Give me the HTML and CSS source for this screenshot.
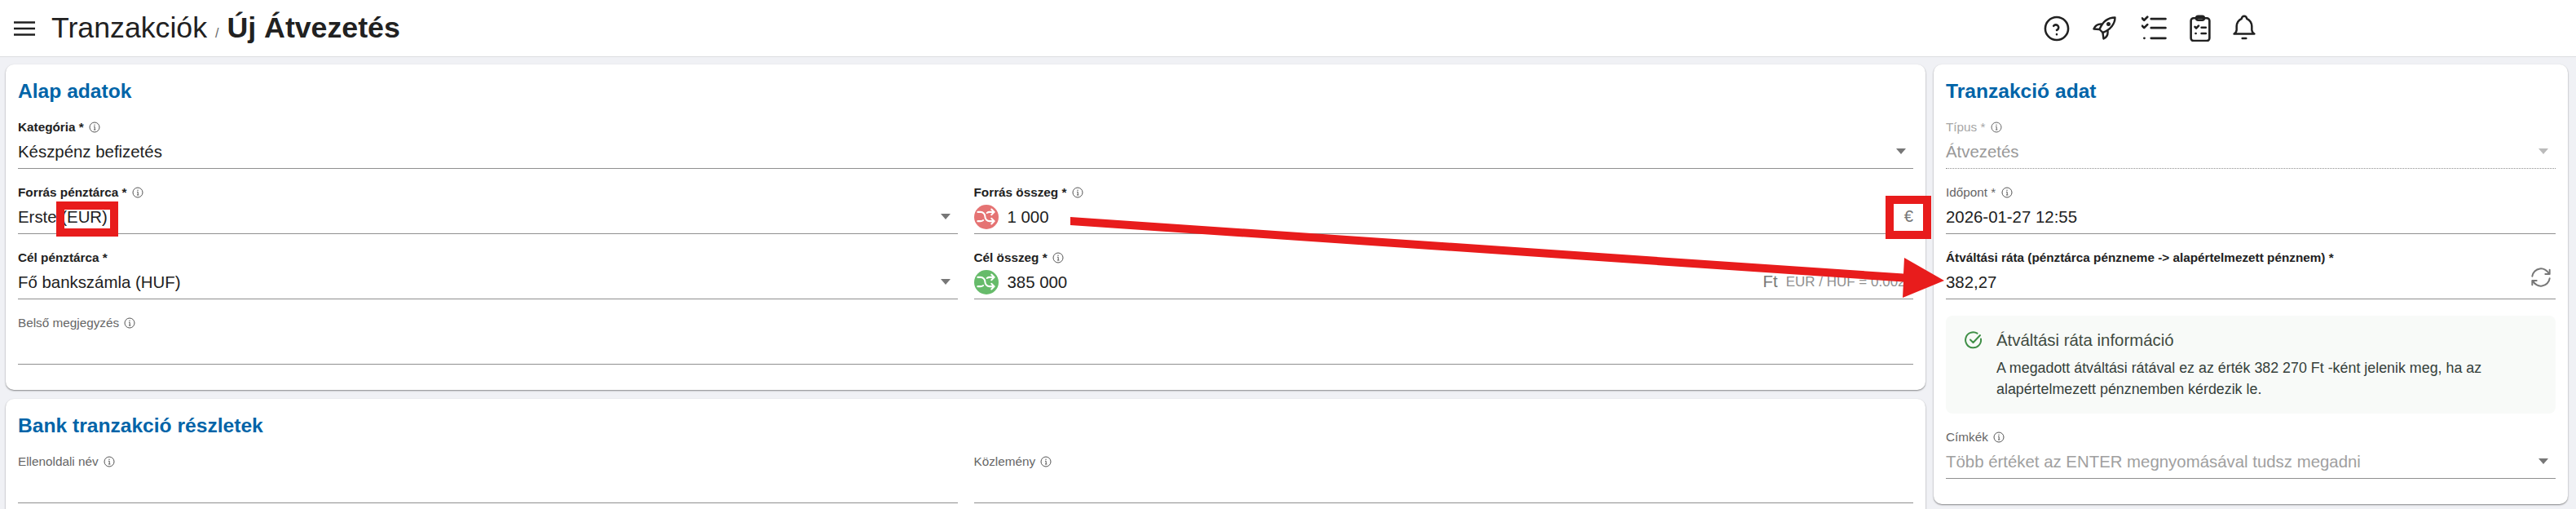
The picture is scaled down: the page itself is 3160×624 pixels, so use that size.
FILE: index.html
```html
<!DOCTYPE html>
<html lang="hu">
<head>
<meta charset="utf-8">
<title>Új Átvezetés</title>
<link rel="stylesheet" href="styles.css">
</head>
<body>
<svg class="defs" width="0" height="0" aria-hidden="true">
  <symbol id="i-info" viewBox="0 0 14 14">
    <circle cx="7" cy="7" r="6" fill="none" stroke="currentColor" stroke-width="1"/>
    <path d="M6 6.3h1.2v3.6M6 10h2.4" fill="none" stroke="currentColor" stroke-width="1"/>
    <circle cx="7" cy="4.2" r=".7" fill="currentColor"/>
  </symbol>
  <symbol id="i-shuffle" viewBox="0 0 24 24">
    <path d="M18 4l3 3l-3 3M18 20l3 -3l-3 -3M3 7h3a5 5 0 0 1 5 5a5 5 0 0 0 5 5h5M21 7h-5a4.98 4.98 0 0 0 -3 1m-4 8a4.98 4.98 0 0 1 -3 1h-3" fill="none" stroke="currentColor" stroke-width="1.8" stroke-linecap="round" stroke-linejoin="round"/>
  </symbol>
</svg>

<header class="topbar">
  <svg class="menu" viewBox="0 0 28 24"><path d="M1 4.5h26M1 12h26M1 19.5h26"/></svg>
  <h1 class="crumbs"><span>Tranzakciók</span><span class="sep">/</span><strong>Új Átvezetés</strong></h1>
  <nav class="actions">
    <svg class="ico ico-help" viewBox="2 2 20 20"><circle cx="12" cy="12" r="8.8"/><path d="M12 16.4v.1M12 13.2a2.1 2.1 0 1 0 -2.4 -3.2"/></svg>
    <svg class="ico ico-rocket" viewBox="0 0 29 29"><path d="M27.5 1.5C20 1.5 12.5 6 8.5 16L12.5 20C22 16.5 27.5 9 27.5 1.5Z"/><path d="M10.5 9.5C6.5 9.5 3 11.5 1.5 15.5L8 16M18.5 18C19 22 17.5 25.5 13.5 27.5L12.5 20.5"/><circle cx="19.5" cy="9.5" r="1.3"/></svg>
    <svg class="ico ico-list" viewBox="3 3 19 19"><path d="M3.5 5l1.4 1.4l2.4 -2.4M3.5 10.6l1.4 1.4l2.4 -2.4M5 19.5h.1M10 5.5h10.5M10 12h10.5M10 19.5h10.5"/></svg>
    <svg class="ico ico-clip" viewBox="4 2 16 20"><rect x="5" y="4.5" width="14" height="17" rx="2"/><rect x="9" y="3" width="6" height="3" rx="1.5"/><path d="M8 11l1 1l1.8 -1.8M13 11.5h3.2M8.6 16h.1M13 16h3.2"/></svg>
    <svg class="ico ico-bell" viewBox="3 2 18 21"><path d="M10 5a2 2 0 1 1 4 0a7 7 0 0 1 4 6v3a4 4 0 0 0 2 3h-16a4 4 0 0 0 2 -3v-3a7 7 0 0 1 4 -6"/><path d="M10.5 20.5h3"/></svg>
  </nav>
</header>

<main class="page">
  <div class="col-left">
    <section class="card">
      <h2 class="card-title">Alap adatok</h2>
      <div class="field">
        <label class="lbl strong">Kategória * <svg class="info"><use href="#i-info"/></svg></label>
        <div class="control"><span class="val">Készpénz befizetés</span><i class="caret"></i></div>
      </div>
      <div class="two">
        <div class="field">
          <label class="lbl strong">Forrás pénztárca * <svg class="info"><use href="#i-info"/></svg></label>
          <div class="control"><span class="val">Erste (EUR)</span><i class="caret"></i></div>
        </div>
        <div class="field">
          <label class="lbl strong">Forrás összeg * <svg class="info"><use href="#i-info"/></svg></label>
          <div class="control"><span class="badge out"><svg><use href="#i-shuffle"/></svg></span><span class="val">1 000</span><span class="suffix">€</span></div>
        </div>
        <div class="field">
          <label class="lbl strong">Cél pénztárca *</label>
          <div class="control"><span class="val">Fő bankszámla (HUF)</span><i class="caret"></i></div>
        </div>
        <div class="field">
          <label class="lbl strong">Cél összeg * <svg class="info"><use href="#i-info"/></svg></label>
          <div class="control"><span class="badge in"><svg><use href="#i-shuffle"/></svg></span><span class="val">385 000</span><span class="suffix">Ft</span><span class="rate">EUR / HUF = 0.0026</span></div>
        </div>
      </div>
      <div class="field">
        <label class="lbl">Belső megjegyzés <svg class="info"><use href="#i-info"/></svg></label>
        <div class="control"></div>
      </div>
    </section>
    <section class="card">
      <h2 class="card-title">Bank tranzakció részletek</h2>
      <div class="two">
        <div class="field">
          <label class="lbl">Ellenoldali név <svg class="info"><use href="#i-info"/></svg></label>
          <div class="control"></div>
        </div>
        <div class="field">
          <label class="lbl">Közlemény <svg class="info"><use href="#i-info"/></svg></label>
          <div class="control"></div>
        </div>
      </div>
    </section>
  </div>

  <aside class="card col-right">
    <h2 class="card-title">Tranzakció adat</h2>
    <div class="field disabled">
      <label class="lbl">Típus * <svg class="info"><use href="#i-info"/></svg></label>
      <div class="control"><span class="val">Átvezetés</span><i class="caret"></i></div>
    </div>
    <div class="field">
      <label class="lbl">Időpont * <svg class="info"><use href="#i-info"/></svg></label>
      <div class="control"><span class="val">2026-01-27 12:55</span></div>
    </div>
    <div class="field">
      <label class="lbl strong">Átváltási ráta (pénztárca pénzneme -&gt; alapértelmezett pénznem) *</label>
      <div class="control"><span class="val">382,27</span>
        <svg class="refresh" viewBox="3 3 18 18"><path d="M4 11a8.1 8.1 0 0 1 15.5 -2m.5 -4v4h-4M20 13a8.1 8.1 0 0 1 -15.5 2m-.5 4v-4h4"/></svg>
      </div>
    </div>
    <div class="notice">
      <svg class="notice-ico" viewBox="0 0 24 24"><path d="M21 10.5a9.5 9.5 0 1 1 -4.5 -6.8M8 11.5l3.5 3.5l8.5 -9"/></svg>
      <div>
        <div class="notice-title">Átváltási ráta információ</div>
        <p class="notice-text">A megadott átváltási rátával ez az érték 382 270 Ft -ként jelenik meg, ha az alapértelmezett pénznemben kérdezik le.</p>
      </div>
    </div>
    <div class="field">
      <label class="lbl">Címkék <svg class="info"><use href="#i-info"/></svg></label>
      <div class="control"><span class="val ph">Több értéket az ENTER megnyomásával tudsz megadni</span><i class="caret"></i></div>
    </div>
  </aside>
</main>

<div class="mark mark-eur"></div>
<div class="mark mark-sym"></div>
<svg class="arrow" viewBox="0 0 3160 624"><polygon points="1313,266 2335,335.5 2336,316 2385,344 2334,365 2335,345.5 1313,276"/></svg>
</body>
</html>
```
FILE: styles.css
```css
* { box-sizing: border-box; }
html, body { margin: 0; height: 100%; overflow: hidden; }
body {
  position: relative;
  background: #f0f1f5;
  color: #212121;
  font-family: "Liberation Sans", Arial, sans-serif;
}
.defs { position: absolute; }

.topbar {
  height: 70px;
  background: #fff;
  border-bottom: 1px solid #dcdde0;
  display: flex;
  align-items: center;
  padding-left: 16px;
}
.menu { width: 28px; height: 24px; fill: none; stroke: #212121; stroke-width: 2.4; margin-right: 19px; }
.crumbs { margin: 0; font-size: 35.7px; font-weight: 400; display: flex; align-items: baseline; line-height: 1; }
.crumbs strong { font-weight: 700; }
.sep { font-size: 16px; color: #666; margin: 0 10px; }

.actions { position: absolute; left: 2507px; top: 18px; display: flex; align-items: center; }
.ico { fill: none; stroke: #212121; stroke-width: 1.6; stroke-linecap: round; stroke-linejoin: round; display: block; }
.ico-help { width: 32px; height: 32px; }
.ico-rocket { width: 29px; height: 29px; margin-left: 28px; stroke-width: 2.4; }
.ico-list { width: 32px; height: 32px; margin-left: 31px; }
.ico-clip { width: 26px; height: 33px; margin-left: 27px; }
.ico-bell { width: 28px; height: 33px; margin-left: 27px; }

.page { display: flex; gap: 10px; padding: 9px 10px 0 7px; align-items: flex-start; }
.col-left { flex: 1; min-width: 0; display: flex; flex-direction: column; gap: 11px; }
.col-right { width: 778px; flex: none; }

.card {
  background: #fff;
  border-radius: 10px;
  padding: 0 15px 31px;
  box-shadow: 0 1px 2px rgba(0, 0, 0, .45);
}
.card-title {
  margin: 0;
  height: 48px;
  padding-top: 18px;
  color: #0064a8;
  font-size: 24.6px;
  font-weight: 700;
  line-height: 30px;
}

.two { display: grid; grid-template-columns: 1fr 1fr; column-gap: 20px; }
.field { height: 80px; display: flex; flex-direction: column; padding-top: 20px; }
.lbl { height: 18px; line-height: 18px; font-size: 15.3px; color: #666; display: flex; align-items: center; gap: 2px; white-space: pre; }
.lbl.strong { font-weight: 700; color: #212121; }
.info { width: 14px; height: 14px; color: #555; flex: none; }
.control {
  flex: 1;
  display: flex;
  align-items: center;
  position: relative;
  border-bottom: 1px solid #8f8f8f;
}
.val { font-size: 20.4px; line-height: 30px; color: #212121; white-space: nowrap; }
.caret { margin-left: auto; margin-right: 9px; width: 0; height: 0; border-left: 6px solid transparent; border-right: 6px solid transparent; border-top: 7px solid #777; }

.badge { width: 30px; height: 30px; border-radius: 50%; color: #fff; display: flex; align-items: center; justify-content: center; margin-right: 11px; flex: none; }
.badge svg { width: 27px; height: 27px; }
.badge.out { background: #e57373; }
.badge.in { background: #66bb6a; }

.suffix { margin-left: auto; font-size: 20.4px; color: #777; white-space: nowrap; }
.rate { margin-left: 10px; font-size: 17px; color: #8f8f8f; white-space: nowrap; }

.refresh { position: absolute; right: 6px; top: 3px; width: 24px; height: 24px; fill: none; stroke: #777; stroke-width: 1.5; stroke-linecap: round; stroke-linejoin: round; }

.disabled .lbl { color: #a6a6a6; }
.disabled .val { color: #999; }
.disabled .caret { border-top-color: #bbb; }
.disabled .control { border-bottom: 1px dotted #8f8f8f; }
.disabled .info { color: #666; }

.notice {
  margin-top: 20px;
  background: #f8faf8;
  border-radius: 8px;
  height: 120px;
  padding: 18px 22px;
  display: flex;
  gap: 16px;
}
.notice-ico { width: 24px; height: 24px; flex: none; fill: none; stroke: #3f8f47; stroke-width: 2; stroke-linecap: round; stroke-linejoin: round; }
.notice-title { font-size: 20.4px; line-height: 24px; color: #3f4a3f; }
.notice-text { margin: 9px 0 0; font-size: 17.85px; line-height: 26px; color: #35403a; }

.ph { color: #a0a0a0; }

.mark { position: absolute; border: 10px solid #e81c1c; }
.mark-eur { left: 69px; top: 247px; width: 76px; height: 43px; }
.mark-sym { left: 2313px; top: 240px; width: 56px; height: 53px; }
.arrow { position: absolute; left: 0; top: 0; width: 3160px; height: 624px; fill: #e81c1c; pointer-events: none; }
```
